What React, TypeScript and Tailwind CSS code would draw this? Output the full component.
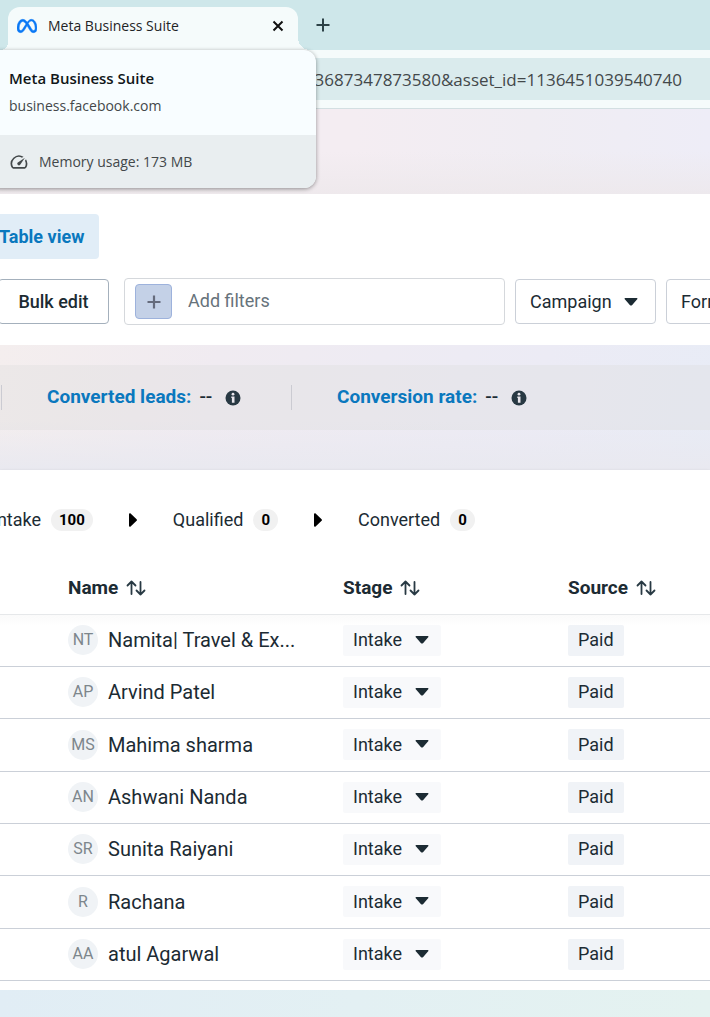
import { useState } from "react"
import { MdSpeed } from "react-icons/md"
import { SiMeta } from "react-icons/si"

interface Lead {
    initials: string
    name: string
}

const LEADS: Lead[] = [
    { initials: "NT", name: "Namita| Travel & Ex..." },
    { initials: "AP", name: "Arvind Patel" },
    { initials: "MS", name: "Mahima sharma" },
    { initials: "AN", name: "Ashwani Nanda" },
    { initials: "SR", name: "Sunita Raiyani" },
    { initials: "R", name: "Rachana" },
    { initials: "AA", name: "atul Agarwal" },
]

const STAGES = [
    { label: "Intake", count: 100 },
    { label: "Qualified", count: 0 },
    { label: "Converted", count: 0 },
]

const Caret = ({ className = "" }: { className?: string }) => (
    <svg viewBox="0 0 14 8" className={`w-3.5 h-2 ${className}`} fill="#1c2b33">
        <path d="M1.200 0h11.600c.7 0 .9.8.4 1.300L8.200 6.900a1.600 1.600 0 0 1-2.400 0L.8 1.300C.3.800.5 0 1.200 0z" />
    </svg>
)

const SortIcon = () => (
    <svg viewBox="0 0 20 18" className="w-5 h-[18px]" fill="none" stroke="#283943" strokeWidth="1.800" strokeLinecap="round" strokeLinejoin="round">
        <path d="M5.500 15V2.500M1.500 6.500l4-4 4 4" />
        <path d="M14.500 3v12.500M10.500 11.500l4 4 4-4" />
    </svg>
)

const InfoIcon = () => (
    <svg viewBox="0 0 16 16" className="w-4 h-4">
        <circle cx="8" cy="8" r="7.500" fill="#283943" />
        <circle cx="8" cy="4.200" r="1.400" fill="#e8e6ec" />
        <path d="M6.300 6.500h3.200v6.200H6.900V7.900h-.6z" fill="#e8e6ec" />
    </svg>
)

const BrowserTabs = () => (
    <div className="flex items-end h-[50px] pl-2 bg-[#cee7ea]">
        <div className="relative flex items-center w-[290px] h-[43px] pl-[9px] pr-2.5 pb-1.5 rounded-t-xl bg-[#f5fbfb]">
            {/* Curved feet of the tab */}
            <span className="absolute bottom-0 -left-2 size-2 bg-[radial-gradient(circle_at_0_0,transparent_8px,#f5fbfb_8px)]" />
            <span className="absolute bottom-0 -right-3 size-3 bg-[radial-gradient(circle_at_100%_0,transparent_12px,#f5fbfb_12px)]" />
            <SiMeta size={20} color="#0a78f5" stroke="#0a78f5" strokeWidth={0.6} />
            <span className="ml-[11px] text-sm text-[#1f2426]">Meta Business Suite</span>
            <button aria-label="Close tab" className="ml-auto p-1">
                <svg viewBox="0 0 12 12" className="size-3" stroke="#111" strokeWidth="2">
                    <path d="M1.500 1.500l9 9M10.500 1.500l-9 9" />
                </svg>
            </button>
        </div>
        <button aria-label="New tab" className="mb-[18px] ml-[18px]">
            <svg viewBox="0 0 14 14" className="size-3.5" stroke="#2c4247" strokeWidth="2">
                <path d="M7 .5v13M.5 7h13" />
            </svg>
        </button>
    </div>
)

const TabHoverCard = () => (
    <div className="absolute z-10 top-[50px] -left-3 w-[328px] rounded-xl overflow-hidden bg-[#f8fdff] shadow-[0_1px_4px_rgba(0,0,0,0.4)]">
        <div className="h-[85px] pl-[21px] pt-[18px] text-sm">
            <p className="text-[15px] leading-5 font-semibold text-[#111719]">Meta Business Suite</p>
            <p className="mt-2 text-[#43484a]">business.facebook.com</p>
        </div>
        <div className="flex items-center h-[53px] pl-[21px] gap-2.5 bg-[#e9eef0] text-sm text-[#43484a]">
            <MdSpeed size={20} />
            Memory usage: 173 MB
        </div>
    </div>
)

const Metric = ({ label }: { label: string }) => (
    <div className="flex items-center h-[25px] w-[290px] shrink-0 border-l border-[#cbcbd2] pl-[45px] text-[19px]">
        <a href="#" className="font-bold text-[#0a78be]">{label}</a>
        <span className="ml-2 w-4 font-medium text-[#1c2b33]">--</span>
        <span className="ml-2.5"><InfoIcon /></span>
    </div>
)

const LeadRow = ({ lead }: { lead: Lead }) => {
    const [stage, setStage] = useState("Intake")

    return (
        <tr className="h-[52px] nth-[3n]:h-[53px] border-b border-[#cbd0d8]">
            <td className="pl-[68px]">
                <div className="flex items-center gap-2.5">
                    <span className="flex items-center justify-center size-[30px] rounded-full bg-[#f0f3f6] text-base text-[#7d868c]">{lead.initials}</span>
                    <span className="text-xl whitespace-nowrap">{lead.name}</span>
                </div>
            </td>
            <td>
                <div className="relative w-[98px]">
                    <select
                        aria-label={`Stage of ${lead.name}`}
                        value={stage}
                        onChange={(e) => setStage(e.target.value)}
                        className="appearance-none block w-full h-[31px] px-2.5 rounded-xs bg-[#f8f9fb] text-lg leading-6"
                    >
                        {STAGES.map((s) => <option key={s.label}>{s.label}</option>)}
                    </select>
                    <Caret className="absolute right-3 top-[11px] pointer-events-none" />
                </div>
            </td>
            <td>
                <span className="inline-flex items-center h-[31px] px-2.5 rounded-xs bg-[#f0f3f7] text-lg align-middle">Paid</span>
            </td>
        </tr>
    )
}

export default function App() {
    return (
        <div className="relative min-h-screen flex flex-col overflow-hidden bg-white font-['Roboto',sans-serif] text-[#1c2b33]">
            <header className="font-['Open_Sans',sans-serif]">
                <BrowserTabs />
                <div className="h-[59px] py-2 bg-[#f5fbfb] border-b border-[#d3dfe2]">
                    <input
                        aria-label="Address"
                        defaultValue="63687347873580&asset_id=1136451039540740"
                        className="block w-full h-[42px] pr-7 bg-[#daebed] text-right text-[17px] text-[#43484a] outline-none"
                    />
                </div>
                <TabHoverCard />
            </header>

            <div className="h-[85px] bg-[linear-gradient(to_bottom,#ede8eb00_50%,#ede8ebcc),linear-gradient(to_right,#f4edf2_50%,#f0edf3_75%,#eeedf7)]" />

            <section className="pt-5 pb-5">
                <button className="block -ml-4 h-[45px] px-[15px] rounded-sm bg-[#e1edf7] text-lg font-bold text-[#0a78be]">Table view</button>
                <div className="flex items-center mt-[19px]">
                    <button className="-ml-0.5 w-[111px] h-[45px] shrink-0 rounded-sm border border-[#a4b0bc] text-lg font-medium">Bulk edit</button>
                    <div className="flex flex-1 items-center h-[47px] ml-[15px] pl-2.5 rounded-sm border border-[#d5d8dc]">
                        <button aria-label="Add filter" className="flex items-center justify-center w-[37px] h-[35px] rounded-sm border border-[#9db2dc] bg-[#c4d1e7]">
                            <svg viewBox="0 0 14 14" className="size-3.5" stroke="#656b7c" strokeWidth="2.200">
                                <path d="M7 .5v13M.5 7h13" />
                            </svg>
                        </button>
                        <input
                            aria-label="Add filters"
                            placeholder="Add filters"
                            className="flex-1 min-w-0 ml-4 pb-0.5 text-lg outline-none placeholder:text-[#67737b]"
                        />
                    </div>
                    <div className="relative w-[141px] shrink-0 ml-2.5">
                        <select aria-label="Campaign" className="appearance-none block w-full h-[45px] pl-3.5 rounded-sm border border-[#cbd0d8] text-lg">
                            <option>Campaign</option>
                        </select>
                        <Caret className="absolute right-[18px] top-[19px] pointer-events-none" />
                    </div>
                    <div className="relative w-[110px] shrink-0 ml-2.5 -mr-[66px]">
                        <select aria-label="Form" className="appearance-none block w-full h-[45px] pl-3.5 rounded-sm border border-[#cbd0d8] text-lg">
                            <option>Form</option>
                        </select>
                        <Caret className="absolute right-[18px] top-[19px] pointer-events-none" />
                    </div>
                </div>
            </section>

            <section className="pt-5 pb-10 bg-[linear-gradient(to_bottom,#e9e9f000_60%,#e9e9f0),linear-gradient(100deg,#f4eeee,#f0ebf1_30%,#ecebf5_75%,#e8ecf6)]">
                <div className="flex items-center h-[65px] pl-px bg-[#dcdcdc]/35">
                    <Metric label="Converted leads:" />
                    <Metric label="Conversion rate:" />
                </div>
            </section>

            <section className="shadow-[0_1px_3px_rgba(0,0,0,0.15)] pb-[9px] bg-white">
                <div className="flex items-center h-[100px] -ml-2 text-lg">
                    {STAGES.map((s, i) => (
                        <div key={s.label} className="flex items-center">
                            {i > 0 && (
                                <svg viewBox="0 0 8 14" className="w-2 h-3.5 mx-9" fill="#000">
                                    <path d="M0 1.200C0 .2.900-.2 1.600.5l6 5.700c.5.5.5 1.100 0 1.600l-6 5.700c-.7.7-1.600.3-1.600-.7z" />
                                </svg>
                            )}
                            {s.label}
                            <span className="ml-2.5 px-2 h-[22px] rounded-full bg-[#f1f1f1] text-[15px] leading-[22px] font-bold text-black">{s.count}</span>
                        </div>
                    ))}
                </div>
                <table className="w-full table-fixed">
                    <colgroup>
                        <col className="w-[343px]" />
                        <col className="w-[225px]" />
                        <col />
                    </colgroup>
                    <thead>
                        <tr className="h-11 border-b border-[#e6e8ea] text-[19px] text-left align-top">
                            {["Name", "Stage", "Source"].map((h) => (
                                <th key={h} className="font-bold first:pl-[68px]">
                                    <button className="flex items-center gap-2 h-9">
                                        {h}
                                        <SortIcon />
                                    </button>
                                </th>
                            ))}
                        </tr>
                    </thead>
                    <tbody className="bg-[linear-gradient(#fafafa,#fff_12px)]">
                        {LEADS.map((lead) => <LeadRow key={lead.name} lead={lead} />)}
                    </tbody>
                </table>
            </section>

            <div className="flex-1 min-h-7 bg-[linear-gradient(to_right,#e1edf5,#e3f0f3_50%,#e4f2f0)]" />
        </div>
    )
}
